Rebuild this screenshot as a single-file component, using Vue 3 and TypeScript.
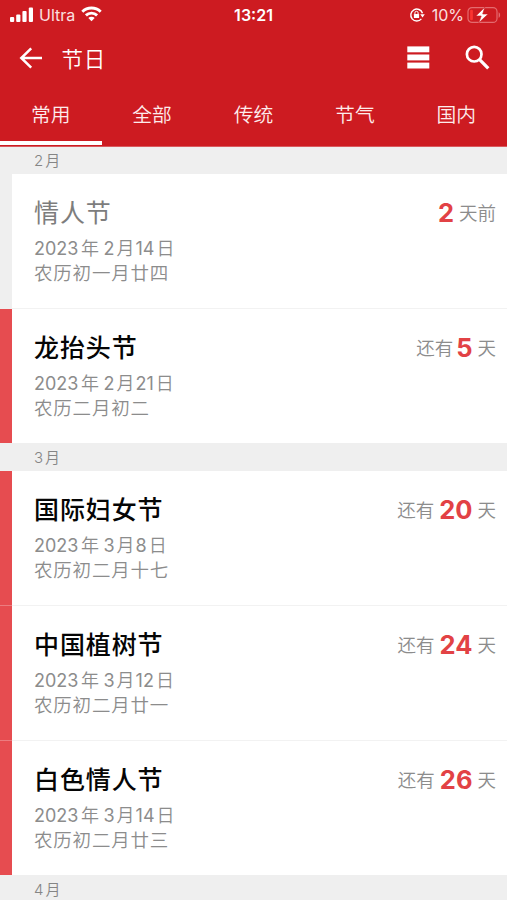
<script setup lang="ts">
interface Festival {
  name: string
  month: number
  day: number
  lunar: string
  before: string
  count: number
  after: string
  past?: boolean
}

interface MonthGroup {
  month: number
  festivals: Festival[]
}

const tabs: string[] = ['常用', '全部', '传统', '节气', '国内']
const activeTab = '常用'

const groups: MonthGroup[] = [
  {
    month: 2,
    festivals: [
      { name: '情人节', month: 2, day: 14, lunar: '初一月廿四', before: '', count: 2, after: '天前', past: true },
      { name: '龙抬头节', month: 2, day: 21, lunar: '二月初二', before: '还有', count: 5, after: '天' },
    ],
  },
  {
    month: 3,
    festivals: [
      { name: '国际妇女节', month: 3, day: 8, lunar: '初二月十七', before: '还有', count: 20, after: '天' },
      { name: '中国植树节', month: 3, day: 12, lunar: '初二月廿一', before: '还有', count: 24, after: '天' },
      { name: '白色情人节', month: 3, day: 14, lunar: '初二月廿三', before: '还有', count: 26, after: '天' },
    ],
  },
  { month: 4, festivals: [] },
]
</script>

<template>
  <div class="screen">
    <header class="header">
      <div class="status">
        <div class="status-left">
          <svg class="signal" width="24" height="16" viewBox="0 0 24 16" fill="#fff">
            <rect x="0" y="10" width="4.2" height="5" rx="1" />
            <rect x="6.2" y="7.4" width="4.2" height="7.6" rx="1" />
            <rect x="12.4" y="4" width="4.2" height="11" rx="1" />
            <rect x="18.8" y="0.6" width="4.2" height="14.4" rx="1" />
          </svg>
          <span class="carrier">Ultra</span>
          <svg class="wifi" width="21" height="16" viewBox="0 0 21 16" fill="none" stroke="#fff" stroke-width="2.9">
            <path d="M1.3 5.7a13.2 13.2 0 0 1 18.4 0" />
            <path d="M4.9 9.4a8 8 0 0 1 11.2 0" />
            <path d="M10.5 15.2 7.3 12a4.6 4.6 0 0 1 6.4 0Z" fill="#fff" stroke="none" />
          </svg>
        </div>
        <span class="time">13:21</span>
        <div class="status-right">
          <svg class="lock" width="16" height="16" viewBox="0 0 16 16">
            <path d="M12.4 11.9A6 6 0 1 1 13.5 6.2" fill="none" stroke="#fff" stroke-width="1.4" />
            <path d="M11.2 7.2h4.6l-2.3 3.2z" fill="#fff" />
            <rect x="4.9" y="7" width="5.2" height="4" rx=".6" fill="#fff" />
            <path d="M5.9 7V5.9a1.6 1.6 0 0 1 3.2 0V7" fill="none" stroke="#fff" stroke-width="1" />
          </svg>
          <span class="percent">10%</span>
          <svg class="battery" width="34" height="18" viewBox="0 0 34 18">
            <rect x="1" y="1.6" width="29" height="14.8" rx="4" fill="none" stroke="#e46b6f" stroke-width="1.2" />
            <path d="M31.6 6.2c2 .7 2 4.9 0 5.6z" fill="#e46b6f" />
            <rect x="3.1" y="3.8" width="2.8" height="10.4" rx="1.2" fill="#fa3430" />
            <path d="M17.8 1.2 8.9 10h5.3l-2.4 6.8L21.2 8h-5.5z" fill="#fff" stroke="#cc1b21" stroke-width=".6" />
          </svg>
        </div>
      </div>

      <div class="toolbar">
        <svg class="back" width="24" height="22" viewBox="0 0 24 22" fill="none" stroke="#fff" stroke-width="2.5">
          <path d="M23 11H2.4M12.2 1.3 2.3 11l9.9 9.7" />
        </svg>
        <h1 class="title">节日</h1>
        <svg class="list" width="23" height="23" viewBox="0 0 23 23" fill="#fff">
          <rect x=".3" y=".4" width="22" height="5.9" />
          <rect x=".3" y="8.5" width="22" height="5.9" />
          <rect x=".3" y="16.6" width="22" height="5.9" />
        </svg>
        <svg class="search" width="25" height="25" viewBox="0 0 25 25" fill="none" stroke="#fff">
          <circle cx="9.2" cy="9.2" r="7.3" stroke-width="2.7" />
          <path d="m14.6 14.6 8.7 8.7" stroke-width="3.3" />
        </svg>
      </div>

      <nav class="tabs">
        <span v-for="tab in tabs" :key="tab" class="tab" :class="{ active: tab === activeTab }">{{ tab }}</span>
      </nav>
    </header>

    <main>
      <section v-for="group in groups" :key="group.month" class="group">
        <h2 class="month">{{ group.month }}<span class="month-unit">月</span></h2>
        <article v-for="item in group.festivals" :key="item.name" class="card" :class="{ past: item.past }">
          <div class="stripe"></div>
          <div class="body">
            <div class="info">
              <h3 class="name">{{ item.name }}</h3>
              <p class="date">
                <span class="num">2023</span><span class="year">年</span><span class="num">{{ item.month }}</span
                ><span class="unit">月</span><span class="num">{{ item.day }}</span><span class="unit">日</span>
              </p>
              <p class="lunar">农历{{ item.lunar }}</p>
            </div>
            <div class="countdown">
              <span v-if="item.before">{{ item.before }}</span>
              <strong class="count" :class="{ wide: item.count > 9 }">{{ item.count }}</strong>
              <span>{{ item.after }}</span>
            </div>
          </div>
        </article>
      </section>
    </main>
  </div>
</template>

<style>
body {
  margin: 0;
  overflow: hidden;
}
</style>

<style scoped>
.screen {
  width: 507px;
  height: 900px;
  overflow: hidden;
  background: #efefef;
  font-family: Inter, "Noto Sans CJK SC", sans-serif;
}

h1,
h2,
h3,
p {
  margin: 0;
  font-weight: 400;
}

svg {
  display: block;
  flex: none;
}

.header {
  display: flex;
  flex-direction: column;
  box-sizing: border-box;
  height: 147px;
  background: #cd1b21;
  border-bottom: 1px solid #d95a5e;
  color: #fff;
}

.status {
  display: grid;
  grid-template-columns: 1fr auto 1fr;
  align-items: center;
  height: 30px;
  padding: 0 6px 0 10px;
  font-size: 16px;
  line-height: 30px;
}

.status-left,
.status-right {
  display: flex;
  align-items: center;
}

.status-right {
  justify-content: flex-end;
}

.signal {
  margin-top: -1px;
}

.carrier {
  margin: 0 0 0 5px;
  color: #fbe0e0;
}

.wifi {
  margin: -3px 0 0 6px;
}

.time {
  margin: 0 4px 0 0;
  font-weight: 600;
}

.percent {
  margin: 0 3px 0 7px;
  color: #fbe0e0;
}

.battery {
  margin-top: -1px;
}

.toolbar {
  display: flex;
  align-items: center;
  height: 54px;
  padding: 0 17px 0 19px;
}

.back {
  margin-top: 1px;
}

.title {
  margin: 4px 0 0 18.5px;
  font-size: 21.5px;
  font-weight: 350;
  letter-spacing: 0.8px;
  line-height: 54px;
}

.list {
  margin: 1px 0 0 auto;
}

.search {
  margin-left: 35px;
}

.tabs {
  display: grid;
  grid-template-columns: repeat(5, 1fr);
  height: 61px;
}

.tab {
  box-sizing: border-box;
  height: 61px;
  border-bottom: 4px solid transparent;
  color: #fdecec;
  font-size: 19.8px;
  font-weight: 350;
  line-height: 63px;
  text-align: center;
}

.tab.active {
  margin-right: -1px;
  padding-right: 1px;
  border-bottom-color: #fff;
}

.month {
  height: 28px;
  padding-left: 34px;
  background: #efefef;
  color: #858585;
  font-size: 15px;
  font-weight: 350;
  line-height: 29px;
}

.group:first-child .month {
  height: 27px;
  line-height: 27px;
}

.month-unit {
  margin-left: 2px;
}

.card {
  display: flex;
  height: 135px;
  background: #fff;
}

.card:last-child {
  height: 134px;
}

.stripe {
  box-sizing: border-box;
  width: 12px;
  background: #e64c50;
  border-bottom: 1px solid #ec7c7f;
}

.past .stripe {
  background: #efefef;
  border-bottom-color: #efefef;
}

.body {
  display: flex;
  flex: 1;
  justify-content: space-between;
  box-sizing: border-box;
  padding: 20px 11px 0 22px;
  border-bottom: 1px solid #f2f2f2;
}

.card:last-child .stripe,
.card:last-child .body {
  border-bottom: 0;
}

.name {
  color: #050505;
  font-size: 25px;
  font-weight: 500;
  letter-spacing: 0.9px;
  line-height: 38px;
}

.past .name {
  color: #7d7d7d;
  font-weight: 400;
}

.date,
.lunar {
  color: #8c8c8c;
  font-size: 18.5px;
  font-weight: 350;
  line-height: 24px;
}

.date {
  margin-top: 5px;
  font-size: 18px;
}

.num {
  font-weight: 400;
}

.lunar {
  letter-spacing: 0.8px;
}

.year {
  margin: 0 4.5px 0 2.5px;
}

.unit {
  margin: 0 1px 0 2px;
}

.countdown {
  display: flex;
  align-items: center;
  height: 38px;
  color: #8c8c8c;
  font-size: 18.5px;
  font-weight: 350;
  line-height: 38px;
}

.count {
  margin: -1px 5px 0 3px;
  color: #e24245;
  font-size: 25.5px;
  font-weight: 700;
}

.count.wide {
  margin: -1px 5px 0;
}
</style>
